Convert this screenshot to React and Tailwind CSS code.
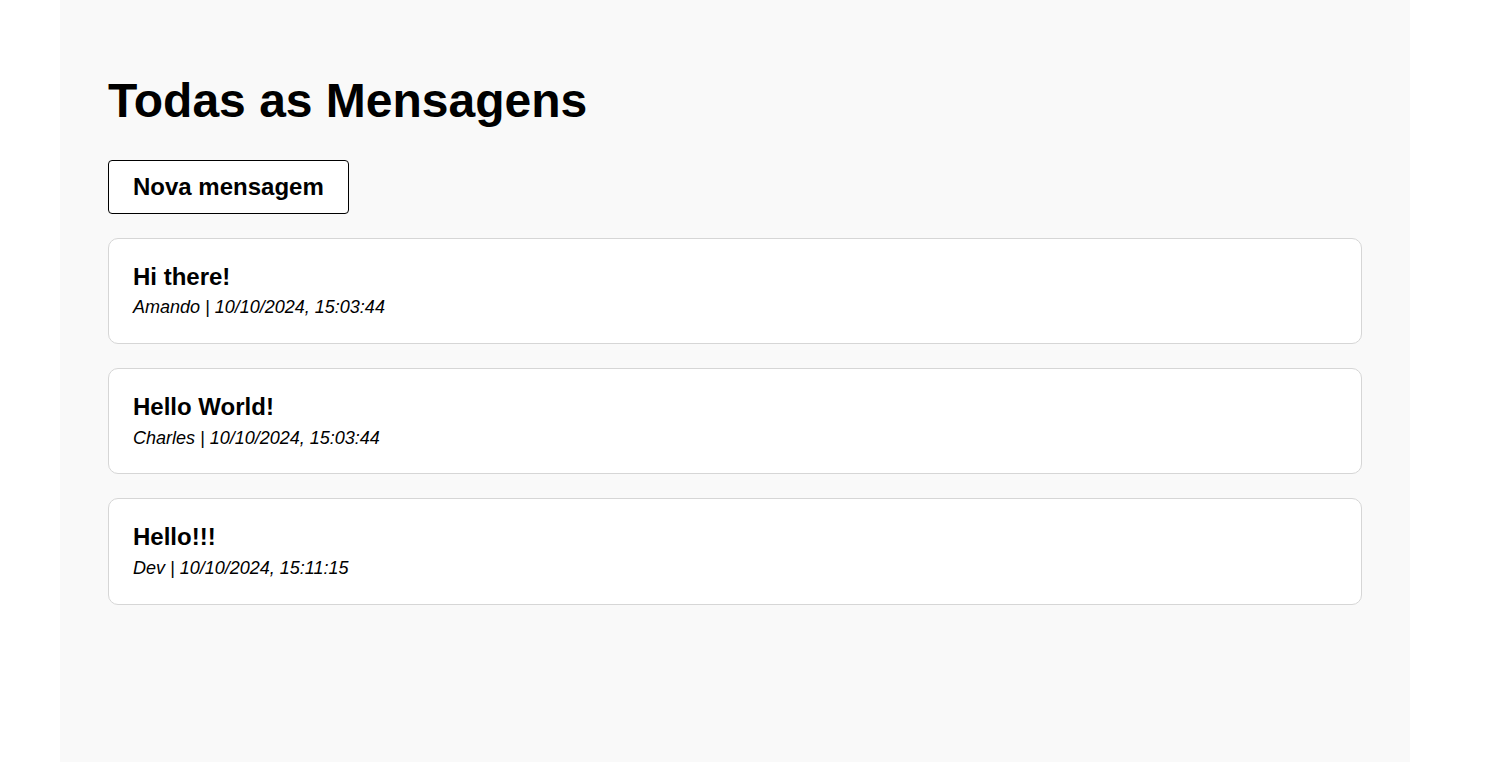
import React from 'react'

const messages = [
  { id: 1, text: 'Hi there!', user: 'Amando', added: '10/10/2024, 15:03:44' },
  { id: 2, text: 'Hello World!', user: 'Charles', added: '10/10/2024, 15:03:44' },
  { id: 3, text: 'Hello!!!', user: 'Dev', added: '10/10/2024, 15:11:15' },
]

function MessageCard({ message }) {
  return (
    <div className="bg-white border border-[#d6d6d6] rounded-[10px] px-6 pt-6 pb-[25px]">
      <h3 className="text-[24px] font-bold leading-[1.15] mb-[7px]">{message.text}</h3>
      <p className="text-[18px] italic leading-[1.15]">
        {message.user} | {message.added}
      </p>
    </div>
  )
}

export default function App() {
  return (
    <div className="min-h-screen bg-white text-black font-['Liberation_Sans',Arial,sans-serif]">
      <div className="ml-[60px] w-[1350px] min-h-screen bg-[#f9f9f9] px-12 pt-[73px] pb-12">
        <h1 className="text-[48px] font-bold leading-[1.15]">Todas as Mensagens</h1>

        <button className="mt-[32px] bg-white border border-black rounded px-6 py-3 text-[24px] font-bold leading-[1.15]">
          Nova mensagem
        </button>

        <div className="mt-6 flex flex-col gap-6">
          {messages.map((m) => (
            <MessageCard key={m.id} message={m} />
          ))}
        </div>
      </div>
    </div>
  )
}
